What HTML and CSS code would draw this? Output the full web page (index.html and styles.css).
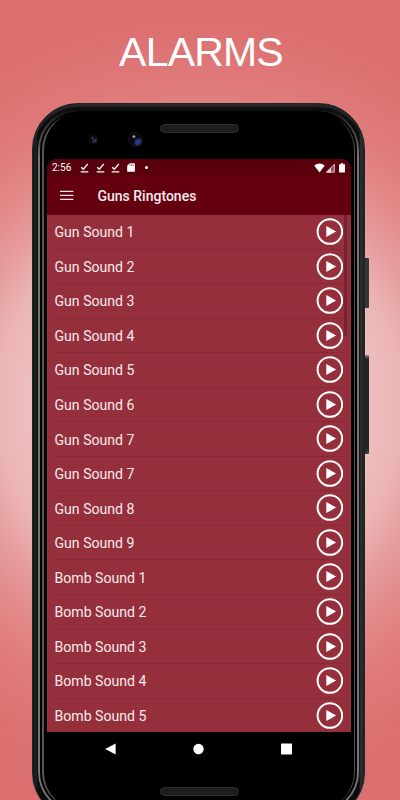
FILE: index.html
```
<!DOCTYPE html>
<html lang="en">
<head>
  <meta charset="UTF-8">
  <meta name="viewport" content="width=device-width, initial-scale=1.0">
  <title>Alarms</title>
  <link rel="stylesheet" href="styles.css">
</head>
<body>
  <!-- Shared icons -->
  <svg class="sprite" width="0" height="0">
    <symbol id="play" viewBox="0 0 27 27">
      <circle cx="13.9" cy="13.5" r="12.3" fill="none" stroke="#fff" stroke-width="2"/>
      <path d="M10.3 8v11l9.8-5.5z" fill="#fff"/>
    </symbol>
    <symbol id="done" viewBox="0 0 9 10">
      <path d="M1.2 4.2l2.2 2.1L7.8.9" fill="none" stroke="#fff" stroke-width="1.4"/>
      <path d="M.7 8.9h7.6" stroke="#fff" stroke-width="1.4"/>
    </symbol>
  </svg>

  <h1 class="title">ALARMS</h1>

  <div class="phone">
    <span class="side-button power"></span>
    <span class="side-button volume"></span>
    <div class="frame">
      <div class="bezel">
        <div class="top">
          <span class="camera small"></span>
          <span class="camera"></span>
          <span class="speaker"></span>
        </div>

        <div class="screen">
          <div class="status">
            <span class="time">2:56</span>
            <svg class="done" width="9" height="10"><use href="#done"/></svg>
            <svg class="done" width="9" height="10"><use href="#done"/></svg>
            <svg class="done" width="9" height="10"><use href="#done"/></svg>
            <svg class="card" width="8" height="9" viewBox="0 0 8 9">
              <path d="M2.7.2h4.6q.6 0 .6.6v7.4q0 .6-.6.6H.8q-.6 0-.6-.6V2.8z" fill="#fff"/>
              <path d="M3 1.3v1.6M4.6 1.3v1.6M6.2 1.3v1.6" stroke="#5a000d" stroke-width=".6"/>
            </svg>
            <span class="dot"></span>
            <svg class="signals" width="32" height="10" viewBox="0 0 32 10">
              <path d="M.2 2.6Q5.5-1.8 10.8 2.6L5.5 9.4z" fill="#fff"/>
              <path d="M12.5 9.2L20.3 1.2v8z" fill="#fff" fill-opacity=".3" stroke="#e8d5d8" stroke-width=".9"/>
              <path d="M12 9.6l5-5v5z" fill="#e8d5d8"/>
              <path d="M25.5 1.3h1.3V.3h2.4v1h1.3q.5 0 .5.5v7q0 .7-.7.7h-4.6q-.7 0-.7-.7v-7q0-.5.5-.5z" fill="#fff"/>
            </svg>
          </div>

          <div class="app-bar">
            <svg width="14" height="11" viewBox="0 0 14 11">
              <path d="M0 1.4h13.4M0 5.4h13.4M0 9.4h13.4" stroke="#f4e6e8" stroke-width="1.4"/>
            </svg>
            <span>Guns Ringtones</span>
          </div>

          <ul class="list">
            <li>Gun Sound 1<svg width="27" height="27"><use href="#play"/></svg></li>
            <li>Gun Sound 2<svg width="27" height="27"><use href="#play"/></svg></li>
            <li>Gun Sound 3<svg width="27" height="27"><use href="#play"/></svg></li>
            <li>Gun Sound 4<svg width="27" height="27"><use href="#play"/></svg></li>
            <li>Gun Sound 5<svg width="27" height="27"><use href="#play"/></svg></li>
            <li>Gun Sound 6<svg width="27" height="27"><use href="#play"/></svg></li>
            <li>Gun Sound 7<svg width="27" height="27"><use href="#play"/></svg></li>
            <li>Gun Sound 7<svg width="27" height="27"><use href="#play"/></svg></li>
            <li>Gun Sound 8<svg width="27" height="27"><use href="#play"/></svg></li>
            <li>Gun Sound 9<svg width="27" height="27"><use href="#play"/></svg></li>
            <li>Bomb Sound 1<svg width="27" height="27"><use href="#play"/></svg></li>
            <li>Bomb Sound 2<svg width="27" height="27"><use href="#play"/></svg></li>
            <li>Bomb Sound 3<svg width="27" height="27"><use href="#play"/></svg></li>
            <li>Bomb Sound 4<svg width="27" height="27"><use href="#play"/></svg></li>
            <li>Bomb Sound 5<svg width="27" height="27"><use href="#play"/></svg></li>
          </ul>
        </div>

        <div class="nav">
          <svg width="11" height="12" viewBox="0 0 11 12"><path d="M10.6.4v11.2L.2 6z" fill="#fff"/></svg>
          <svg width="11" height="12" viewBox="0 0 11 12"><circle cx="5.5" cy="6" r="5.2" fill="#fff"/></svg>
          <svg width="11" height="12" viewBox="0 0 11 12"><rect y=".6" width="11" height="10.8" rx=".6" fill="#fff"/></svg>
        </div>
        <span class="speaker bottom"></span>
      </div>
    </div>
  </div>
</body>
</html>
```

FILE: styles.css
```
* { box-sizing: border-box; }
body {
  margin: 0;
  height: 800px;
  overflow: hidden;
  font-family: Roboto, sans-serif;
  background: radial-gradient(circle at 200px 405px, #efc0c0 160px, #ecb5b5 202px, #e79d9d 237px, #e38787 280px, #e07b7c 315px, #dc6f6f 385px);
}
.sprite { position: absolute; }
.title {
  margin: 0;
  height: 103px;
  padding-left: 2px;
  font: 400 41px/105px "Liberation Sans", Arial, sans-serif;
  letter-spacing: -0.8px;
  text-align: center;
  color: #fff;
}

/* Phone body */
.phone {
  position: relative;
  width: 333px;
  height: 716px;
  margin-left: 32px;
}
.frame {
  height: 100%;
  padding: 5px;
  border-radius: 46px;
  border: 1px solid #17292a;
  background: linear-gradient(90deg, #101414, #222 3px, #0c0c0c 5px, #0c0c0c 326px, #333 328px, #1c1c1c);
  box-shadow: inset 0 3px 2px #292929;
}
/* rim highlight fades out towards the top edge */
.bezel {
  height: 100%;
  padding: 0 7px;
  border: 2px solid transparent;
  border-radius: 41px;
  background:
    linear-gradient(#000, #000) padding-box,
    linear-gradient(#0a0a0a, #2a2a2a 10px, #777 50px, #777) border-box;
  box-shadow: inset 0 0 0 2px #000, inset 4px 0 0 #555, inset -3px 0 0 #505050;
}
.side-button {
  position: absolute;
  left: 333px;
  width: 4px;
  border-radius: 0 1px 1px 0;
  background: #363636;
}
.power { top: 155px; height: 50px; }
.volume { top: 252px; height: 99px; background: linear-gradient(#888, #252525 4px, #252525 94px, #444); }

.top {
  display: flex;
  height: 48px;
  padding: 13px 0 0 39px;
}
.camera {
  width: 15px;
  height: 15px;
  margin: 8px 0 0 30px;
  border-radius: 50%;
  border: 1px solid #151515;
  background: radial-gradient(circle at 38% 28%, #ddd 0, #777 1px, transparent 2px), radial-gradient(circle at 72% 72%, #34428c 0, #26306c 3px, #080810 5px);
}
.camera.small {
  width: 9px;
  height: 9px;
  margin: 11px 0 0 3px;
  background: radial-gradient(circle at 38% 28%, #bbb 0, transparent 1px), radial-gradient(circle at 72% 72%, #2c3878 0, #20285a 2px, #080810 3px);
}
.speaker {
  width: 79px;
  height: 9px;
  margin-left: 17px;
  border-radius: 5px;
  border: 1px solid #2e2e2e;
  background: #1d1d1d;
}
.speaker.bottom { display: block; margin: 22px 0 0 113px; }

/* Screen */
.screen {
  width: 304px;
  height: 573px;
  overflow: hidden;
  border-radius: 11px 11px 0 0;
  background: #962f3c;
}
.status {
  display: flex;
  align-items: center;
  height: 17px;
  padding: 0 5px;
  background: #5a000d;
  color: #fff;
  font-size: 10px;
}
.time { width: 28px; }
.done { margin-right: 6.5px; }
.card { margin-left: .5px; }
.dot { width: 3px; height: 3px; margin-left: 10px; border-radius: 50%; background: #fff; }
.signals { margin-left: auto; }
.app-bar {
  display: flex;
  align-items: center;
  gap: 23.5px;
  height: 39px;
  padding: 0 0 0 13px;
  background: #65000e;
  color: #f6eaec;
  font-size: 14px;
  font-weight: 500;
}
.list {
  position: relative;
  margin: 0;
  padding: 0 4px 0 3.5px;
  list-style: none;
}
.list::after {
  content: "";
  position: absolute;
  top: 0;
  right: 4px;
  width: 3px;
  height: 121px;
  background: #752431;
}
.list li {
  display: flex;
  align-items: center;
  justify-content: space-between;
  height: 34.56px;
  padding: 1px 4px 0 4px;
  border-bottom: 1px solid #872938;
  color: #f6eaec;
  font-size: 14.1px;
}
.list li svg { margin-top: -1.5px; overflow: visible; }
.list li:last-child { border-bottom-color: transparent; }

.nav {
  display: flex;
  justify-content: space-between;
  align-items: center;
  height: 33px;
  padding: 0 58px;
}
```
